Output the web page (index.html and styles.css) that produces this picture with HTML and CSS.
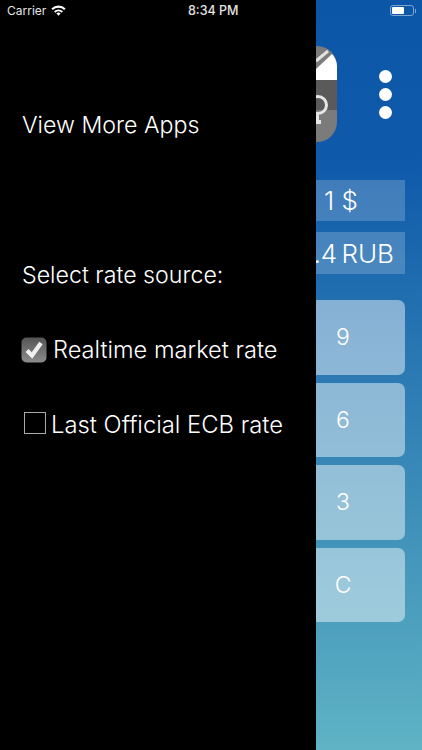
FILE: index.html
```html
<!DOCTYPE html>
<html lang="en">

<head>
    <meta charset="UTF-8">
    <link rel="stylesheet" href="styles.css">
    <title>Currency converter</title>
</head>

<body>
<div class="screen">
    <div class="status">
        <div class="status_left">
            <span>Carrier</span>
            <svg class="wifi" width="15" height="11" viewBox="0 0 15 11">
                <path d="M0.4 3.5a10.2 10.2 0 0 1 14.200 0l-1.400 1.500a8.200 8.200 0 0 0-11.400 0z" fill="#fff"/>
                <path d="M3 6.200a6.500 6.500 0 0 1 9 0l-1.400 1.500a4.500 4.500 0 0 0-6.200 0z" fill="#fff"/>
                <path d="M5.400 8.500a3 3 0 0 1 4.200 0l-2.100 2.300z" fill="#fff"/>
            </svg>
        </div>
        <div class="status_time">8:34 PM</div>
        <div class="battery">
            <div class="battery_body"><div class="battery_level"></div></div>
            <div class="battery_tip"></div>
        </div>
    </div>

    <div class="drawer">
        <a class="drawer_link">View More Apps</a>
        <div class="drawer_title">Select rate source:</div>
        <div class="source source_first">
            <svg class="checked" width="26" height="26" viewBox="0 0 26 26">
                <defs>
                    <linearGradient id="box" x1="0" y1="0" x2="0" y2="1">
                        <stop offset="0" stop-color="#555"/>
                        <stop offset="1" stop-color="#8c8c8c"/>
                    </linearGradient>
                </defs>
                <rect x="0.5" y="0.5" width="25" height="25" rx="5" fill="url(#box)"/>
                <path d="M6 13.500l5 5 9-12.500" fill="none" stroke="#f0f0f0" stroke-width="4.200"/>
            </svg>
            <span>Realtime market rate</span>
        </div>
        <div class="source source_second">
            <div class="unchecked"></div>
            <span>Last Official ECB rate</span>
        </div>
    </div>

    <div class="main">
        <div class="top">
            <svg class="app_icon" width="21" height="96" viewBox="0 0 21 96">
                <path d="M0 0h1a20 20 0 0 1 20 20v56a20 20 0 0 1-20 20h-1z" fill="#7b7b7b"/>
                <path d="M0 34h21v30h-21z" fill="#5a5a5a"/>
                <path d="M0 34v-11l16-15a20 20 0 0 1 5 12v14z" fill="#fff"/>
                <path d="M0 15l12-10" stroke="#e2e2e2" stroke-width="3"/>
                <circle cx="2" cy="59" r="8.500" fill="none" stroke="#e6e6e6" stroke-width="3"/>
                <path d="M0 69h3v5h2v4h-5z" fill="#e6e6e6"/>
            </svg>
            <div class="dots">
                <div class="dot"></div>
                <div class="dot"></div>
                <div class="dot"></div>
            </div>
        </div>

        <div class="rate rate_from">1 $</div>
        <div class="rate rate_to">.4 RUB</div>

        <div class="keys">
            <div class="key">9</div>
            <div class="key">6</div>
            <div class="key">3</div>
            <div class="key">C</div>
        </div>
    </div>
</div>
</body>
</html>
```

FILE: styles.css
```css
body, html {
    margin: 0;
    padding: 0;
    background: #000;
    font-family: Inter, "Liberation Sans", sans-serif;
}

.screen {
    position: relative;
    display: flex;
    width: 422px;
    height: 750px;
    overflow: hidden;
    color: #fff;
}

/* Status bar */

.status {
    position: absolute;
    top: 0;
    left: 0;
    right: 0;
    height: 21px;
    display: flex;
    align-items: center;
    color: #e4e4e4;
}
.status_left {
    width: 188px;
    padding-left: 7px;
    box-sizing: border-box;
    display: flex;
    align-items: center;
    gap: 5px;
    font-size: 12px;
}
.status_time {
    width: 202px;
    font-weight: 500;
    font-size: 12.5px;
}
.battery {
    display: flex;
    align-items: center;
}
.battery_body {
    width: 20px;
    height: 7px;
    padding: 1px;
    border: 1px solid #7da3cf;
    border-radius: 3px;
}
.battery_level {
    width: 12px;
    height: 7px;
    background: #fff;
    border-radius: 1px;
}
.battery_tip {
    width: 1px;
    height: 4px;
    margin-left: 1px;
    background: #7da3cf;
}

/* Drawer */

.drawer {
    width: 316px;
    flex-shrink: 0;
    background: #000;
    font-size: 23.2px;
    font-weight: 300;
    padding-top: 111px;
    box-sizing: border-box;
}
.drawer_link {
    display: block;
    margin-left: 22px;
    line-height: 28px;
}
.drawer_title {
    margin: 122px 0 0 22px;
    line-height: 28px;
}
.source {
    display: flex;
    align-items: center;
    line-height: 28px;
}
.source_first {
    margin: 47px 0 0 21px;
    gap: 6px;
    font-size: 23.6px;
}
.source_second {
    margin: 47px 0 0 24px;
    gap: 5px;
    font-size: 23.8px;
}
.unchecked {
    width: 20px;
    height: 20px;
    margin-bottom: 4px;
    border: 1px solid #aaa;
}

/* Calculator behind the drawer */

.main {
    flex: 1;
    min-width: 0;
    overflow: hidden;
    padding: 46px 17px 0 0;
    background: linear-gradient(to bottom, #0c56a8 0%, #0f5aaa 22%, #5fb3c4 100%);
    display: flex;
    flex-direction: column;
}
.top {
    height: 96px;
    display: flex;
}
.dots {
    margin: 24px 0 0 42px;
    display: flex;
    flex-direction: column;
    gap: 5px;
}
.dot {
    width: 13px;
    height: 13px;
    border-radius: 50%;
    background: #fff;
}
.rate {
    height: 41px;
    display: flex;
    align-items: center;
    justify-content: flex-end;
    white-space: nowrap;
    font-size: 26px;
    font-weight: 300;
    background: rgba(255, 255, 255, 0.2);
}
.rate_from {
    margin-top: 38px;
    padding-right: 47px;
}
.rate_to {
    margin-top: 11px;
    height: 42px;
    padding-right: 11px;
    word-spacing: -3px;
}
.keys {
    margin-top: 26px;
    display: flex;
    flex-direction: column;
    gap: 8px;
}
.key {
    height: 74.5px;
    display: flex;
    align-items: center;
    justify-content: center;
    padding-right: 35px;
    font-size: 23px;
    font-weight: 300;
    background: rgba(255, 255, 255, 0.46);
    border-radius: 0 7px 7px 0;
}
```
